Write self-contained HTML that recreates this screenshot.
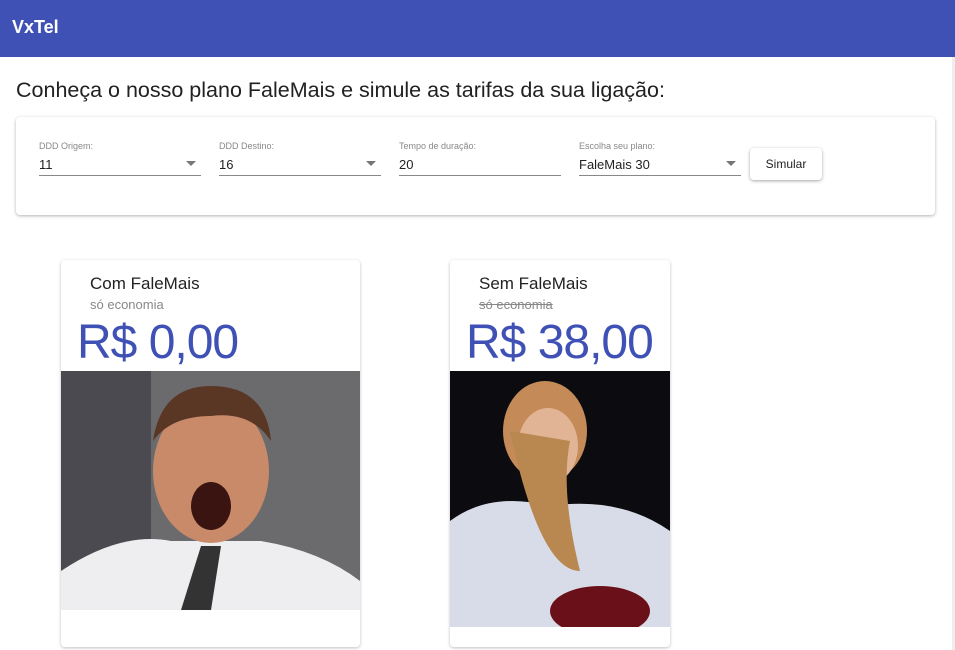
<!DOCTYPE html>
<html><head><meta charset="utf-8"><style>
*{box-sizing:border-box;margin:0;padding:0}
body{width:955px;height:650px;overflow:hidden;background:#fff;font-family:"Liberation Sans",Arial,sans-serif;position:relative}
.hdr{position:absolute;left:0;top:0;width:955px;height:57px;background:#3f51b5;color:#fff;font-size:18px;font-weight:bold;padding:17px 0 0 12px}
.sb{position:absolute;right:0;top:57px;width:3px;height:593px;background:#eee}
h1{position:absolute;left:16px;top:78px;font-size:21.5px;font-weight:normal;color:#212121}
.form{position:absolute;left:16px;top:117px;width:919px;height:98px;border-radius:4px;box-shadow:0 1px 3px rgba(0,0,0,.3)}
.f{position:absolute;top:24px;width:162px;height:35px;border-bottom:1px solid #888}
.f .l{font-size:9px;color:#888}
.f .v{font-size:13px;color:#222;margin-top:6px}
.f .a{position:absolute;right:5px;top:20px;width:0;height:0;border-left:5px solid transparent;border-right:5px solid transparent;border-top:5px solid #777}
.btn{position:absolute;left:734px;top:31px;width:72px;height:32px;border-radius:4px;box-shadow:0 1px 3px rgba(0,0,0,.35);font-size:12px;text-align:center;line-height:32px;color:#222}
.card{position:absolute;top:260px;height:387px;border-radius:4px;box-shadow:0 1px 3px rgba(0,0,0,.25);overflow:hidden;background:#fff}
.t{position:absolute;left:29px;top:14px;font-size:17px;color:#222}
.s{position:absolute;left:29px;top:37px;font-size:13px;color:#888}
.p{position:absolute;left:16px;top:55px;font-size:48px;color:#3f51b5;letter-spacing:-1px}
.img{position:absolute;left:0;top:111px}
</style></head><body>
<div class="hdr">VxTel</div>
<div class="sb"></div>
<h1>Conheça o nosso plano FaleMais e simule as tarifas da sua ligação:</h1>
<div class="form">
<div class="f" style="left:23px"><div class="l">DDD Origem:</div><div class="v">11</div><div class="a"></div></div>
<div class="f" style="left:203px"><div class="l">DDD Destino:</div><div class="v">16</div><div class="a"></div></div>
<div class="f" style="left:383px"><div class="l">Tempo de duração:</div><div class="v">20</div></div>
<div class="f" style="left:563px"><div class="l">Escolha seu plano:</div><div class="v">FaleMais 30</div><div class="a"></div></div>
<div class="btn">Simular</div>
</div>
<div class="card" style="left:61px;width:299px">
<div class="t">Com FaleMais</div><div class="s">só economia</div><div class="p">R$ 0,00</div>
<svg class="img" width="299" height="239"><rect width="299" height="239" fill="#6b6b6e"/><rect x="0" y="0" width="90" height="239" fill="#4a4a50"/><path d="M0 239 L0 200 Q60 160 110 170 L200 170 Q260 180 299 210 L299 239Z" fill="#eeeef0"/><ellipse cx="150" cy="100" rx="58" ry="72" fill="#c98a6a"/><path d="M92 70 Q100 15 150 15 Q205 15 210 70 Q190 40 150 45 Q110 45 92 70Z" fill="#5a3624"/><ellipse cx="150" cy="135" rx="20" ry="24" fill="#3a1410"/><path d="M140 175 L160 175 L150 239 L120 239Z" fill="#333"/></svg>
</div>
<div class="card" style="left:450px;width:220px">
<div class="t">Sem FaleMais</div><div class="s" style="text-decoration:line-through">só economia</div><div class="p">R$ 38,00</div>
<svg class="img" width="220" height="256"><rect width="220" height="256" fill="#0c0b10"/><path d="M0 256 L0 150 Q40 120 100 135 Q170 125 220 160 L220 256Z" fill="#d8dce8"/><ellipse cx="95" cy="60" rx="42" ry="50" fill="#c48a58"/><ellipse cx="98" cy="75" rx="30" ry="38" fill="#e2b496"/><path d="M60 60 Q90 200 130 200 Q110 120 120 70Z" fill="#b88850"/><ellipse cx="150" cy="240" rx="50" ry="25" fill="#6a1018"/></svg>
</div>
</body></html>
